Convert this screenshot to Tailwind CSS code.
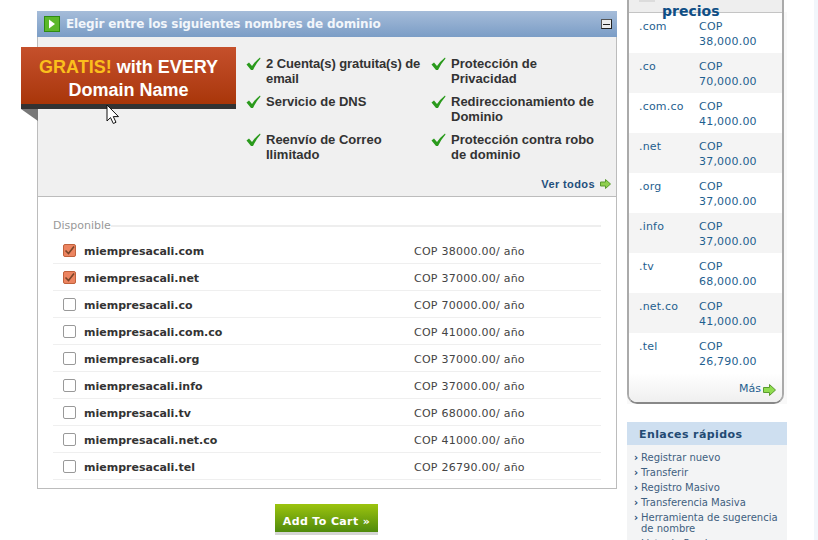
<!DOCTYPE html>
<html lang="es">
<head>
  <meta charset="UTF-8">
  <title>Elegir dominio</title>
  <script src="https://cdn.jsdelivr.net/npm/@tailwindcss/browser@4"></script>
</head>
<body class="bg-white overflow-hidden h-[540px] w-[818px] font-['DejaVu_Sans',sans-serif]">
  <div class="flex items-start pl-[37px] h-[540px] overflow-hidden">

    <!-- main column -->
    <div class="w-[580px] shrink-0 pt-[11px]">
      <div class="relative border border-t-0 border-[#bcbcbc]">
        <div class="-mx-px h-[26px] flex items-center pl-[7px] pr-[5px] bg-gradient-to-b from-[#a5bcd9] to-[#7b9dc6]">
          <span class="w-[16px] h-[16px] border border-[#2e8b12] bg-[#5cb82a] flex items-center justify-center">
            <svg width="8" height="10" viewBox="0 0 8 10"><path d="M1 0.5 L7 5 L1 9.5 Z" fill="#fff"/></svg>
          </span>
          <span class="ml-[6px] text-[12px] font-bold text-[#f2f6fb] tracking-[-0.13px]">Elegir entre los siguientes nombres de dominio</span>
          <span class="ml-auto w-[11px] h-[10px] border border-[#555] border-r-[#222] border-b-[#222] bg-[#eee] flex items-center justify-center">
            <span class="block w-[7px] h-px bg-[#222]"></span>
          </span>
        </div>

        <div class="h-[160px] bg-[#f0f0f0] border-b border-[#bcbcbc] pt-[19px] font-['Liberation_Sans',sans-serif]">
          <div class="grid grid-cols-[185px_170px] pl-[208px] text-[13px] leading-[15px] font-bold text-[#333]">
            <div class="flex gap-[5px] h-[38px]"><svg class="w-[15px] h-[15px] shrink-0" viewBox="0 0 15 15"><path d="M0.5 8.5 L3 6.5 L6 10 Q9 5.5 14 1.5 L14.5 2.5 Q10 7.5 7 14 H5 Z" fill="#2a9a1c"/></svg><span class="tracking-[-0.1px]">2 Cuenta(s) gratuita(s) de email</span></div>
            <div class="flex gap-[5px] h-[38px]"><svg class="w-[15px] h-[15px] shrink-0" viewBox="0 0 15 15"><path d="M0.5 8.5 L3 6.5 L6 10 Q9 5.5 14 1.5 L14.5 2.5 Q10 7.5 7 14 H5 Z" fill="#2a9a1c"/></svg><span>Protección de Privacidad</span></div>
            <div class="flex gap-[5px] h-[38px]"><svg class="w-[15px] h-[15px] shrink-0" viewBox="0 0 15 15"><path d="M0.5 8.5 L3 6.5 L6 10 Q9 5.5 14 1.5 L14.5 2.5 Q10 7.5 7 14 H5 Z" fill="#2a9a1c"/></svg><span>Servicio de DNS</span></div>
            <div class="flex gap-[5px] h-[38px]"><svg class="w-[15px] h-[15px] shrink-0" viewBox="0 0 15 15"><path d="M0.5 8.5 L3 6.5 L6 10 Q9 5.5 14 1.5 L14.5 2.5 Q10 7.5 7 14 H5 Z" fill="#2a9a1c"/></svg><span>Redireccionamiento de Dominio</span></div>
            <div class="flex gap-[5px] h-[38px]"><svg class="w-[15px] h-[15px] shrink-0" viewBox="0 0 15 15"><path d="M0.5 8.5 L3 6.5 L6 10 Q9 5.5 14 1.5 L14.5 2.5 Q10 7.5 7 14 H5 Z" fill="#2a9a1c"/></svg><span>Reenvío de Correo Ilimitado</span></div>
            <div class="flex gap-[5px] h-[38px]"><svg class="w-[15px] h-[15px] shrink-0" viewBox="0 0 15 15"><path d="M0.5 8.5 L3 6.5 L6 10 Q9 5.5 14 1.5 L14.5 2.5 Q10 7.5 7 14 H5 Z" fill="#2a9a1c"/></svg><span>Protección contra robo de dominio</span></div>
          </div>
          <div class="flex items-center justify-end pr-[5px] mt-[6px] text-[11px] font-bold text-[#1f4f7c] tracking-[0.4px]">
            Ver todos
            <svg class="ml-[5px]" width="11" height="10" viewBox="0 0 11 10"><path d="M0.5 3 H5.5 V0.5 L10.5 5 L5.5 9.5 V7 H0.5 Z" fill="#8fd04f" stroke="#5a9a2e"/></svg>
          </div>
        </div>

        <!-- promo ribbon -->
        <div class="absolute left-[-17px] top-[36px] w-[215px]">
          <div class="h-[57px] bg-gradient-to-b from-[#c5502b] to-[#a93608] text-center pt-[9px] font-['Liberation_Sans',sans-serif] font-bold text-[18px] leading-[23px] text-white">
            <span class="text-[#fbbf1c]">GRATIS!</span> with EVERY<br>Domain Name
          </div>
          <div class="h-[5px] bg-[#333]"></div>
          <svg class="block" width="17" height="12" viewBox="0 0 17 12"><path d="M0 0 H17 V12 Z" fill="#777"/></svg>
        </div>
        <!-- mouse cursor -->
        <svg class="absolute left-[68px] top-[93px]" width="14" height="21" viewBox="0 0 14 21"><path d="M1 1 V17 L4.5 13.6 L7.3 19.5 L10 18.3 L7.3 12.6 H12.5 Z" fill="#fff" stroke="#111" stroke-width="1"/></svg>

        <!-- domains -->
        <div class="bg-white px-[15px] pt-[22px] pb-[8px]">
          <div class="flex items-center h-[14px] text-[11px] text-[#999]">Disponible<span class="flex-1 h-[2px] bg-[#eeeeee]"></span></div>
          <div class="mt-[4px] text-[11px]">
            <div class="flex items-center h-[27px] border-b border-[#efefef]"><span class="w-[13px] h-[13px] ml-[10px] rounded-[2px] border border-[#c0623c] bg-[#ec8460] flex items-center justify-center"><svg width="11" height="11" viewBox="0 0 11 11"><path d="M1.5 5.5 L4.5 8.5 L10 1.5" fill="none" stroke="#7a4528" stroke-width="1.6"/></svg></span><span class="ml-[8px] mt-[4px] w-[330px] font-bold text-[#333]">miempresacali.com</span><span class="mt-[4px] text-[#444] tracking-[0.25px]">COP 38000.00/ año</span></div>
            <div class="flex items-center h-[27px] border-b border-[#efefef]"><span class="w-[13px] h-[13px] ml-[10px] rounded-[2px] border border-[#c0623c] bg-[#ec8460] flex items-center justify-center"><svg width="11" height="11" viewBox="0 0 11 11"><path d="M1.5 5.5 L4.5 8.5 L10 1.5" fill="none" stroke="#7a4528" stroke-width="1.6"/></svg></span><span class="ml-[8px] mt-[4px] w-[330px] font-bold text-[#333]">miempresacali.net</span><span class="mt-[4px] text-[#444] tracking-[0.25px]">COP 37000.00/ año</span></div>
            <div class="flex items-center h-[27px] border-b border-[#efefef]"><input type="checkbox" class="appearance-none w-[13px] h-[13px] ml-[10px] rounded-[2px] border border-[#999] bg-white"><span class="ml-[8px] mt-[4px] w-[330px] font-bold text-[#333]">miempresacali.co</span><span class="mt-[4px] text-[#444] tracking-[0.25px]">COP 70000.00/ año</span></div>
            <div class="flex items-center h-[27px] border-b border-[#efefef]"><input type="checkbox" class="appearance-none w-[13px] h-[13px] ml-[10px] rounded-[2px] border border-[#999] bg-white"><span class="ml-[8px] mt-[4px] w-[330px] font-bold text-[#333]">miempresacali.com.co</span><span class="mt-[4px] text-[#444] tracking-[0.25px]">COP 41000.00/ año</span></div>
            <div class="flex items-center h-[27px] border-b border-[#efefef]"><input type="checkbox" class="appearance-none w-[13px] h-[13px] ml-[10px] rounded-[2px] border border-[#999] bg-white"><span class="ml-[8px] mt-[4px] w-[330px] font-bold text-[#333]">miempresacali.org</span><span class="mt-[4px] text-[#444] tracking-[0.25px]">COP 37000.00/ año</span></div>
            <div class="flex items-center h-[27px] border-b border-[#efefef]"><input type="checkbox" class="appearance-none w-[13px] h-[13px] ml-[10px] rounded-[2px] border border-[#999] bg-white"><span class="ml-[8px] mt-[4px] w-[330px] font-bold text-[#333]">miempresacali.info</span><span class="mt-[4px] text-[#444] tracking-[0.25px]">COP 37000.00/ año</span></div>
            <div class="flex items-center h-[27px] border-b border-[#efefef]"><input type="checkbox" class="appearance-none w-[13px] h-[13px] ml-[10px] rounded-[2px] border border-[#999] bg-white"><span class="ml-[8px] mt-[4px] w-[330px] font-bold text-[#333]">miempresacali.tv</span><span class="mt-[4px] text-[#444] tracking-[0.25px]">COP 68000.00/ año</span></div>
            <div class="flex items-center h-[27px] border-b border-[#efefef]"><input type="checkbox" class="appearance-none w-[13px] h-[13px] ml-[10px] rounded-[2px] border border-[#999] bg-white"><span class="ml-[8px] mt-[4px] w-[330px] font-bold text-[#333]">miempresacali.net.co</span><span class="mt-[4px] text-[#444] tracking-[0.25px]">COP 41000.00/ año</span></div>
            <div class="flex items-center h-[27px] border-b border-[#efefef]"><input type="checkbox" class="appearance-none w-[13px] h-[13px] ml-[10px] rounded-[2px] border border-[#999] bg-white"><span class="ml-[8px] mt-[4px] w-[330px] font-bold text-[#333]">miempresacali.tel</span><span class="mt-[4px] text-[#444] tracking-[0.25px]">COP 26790.00/ año</span></div>
          </div>
        </div>
      </div>

      <div class="flex justify-center mt-[15px] pr-[1px]">
        <button class="w-[103px] h-[31px] pt-[9px] border-b-[3px] border-[#d5d5d5] bg-gradient-to-b from-[#9cc40e] to-[#4f8a0c] text-[11px] font-bold text-white tracking-[0.37px]">Add To Cart »</button>
      </div>
    </div>

    <!-- sidebar -->
    <div class="w-[160px] shrink-0 ml-[10px] text-[11px]">
      <div class="bg-gradient-to-b from-white from-[12px] to-[#f9f9f9] to-[12px]">
      <div class="w-[157px] border-x-2 border-b-2 border-[#aaaaaa] border-b-[#888] rounded-b-[10px] h-[404px] bg-white overflow-hidden">
        <div class="h-[13px] border-b border-[#c4c4c4] bg-[#eee] relative">
          <span class="absolute left-[10px] top-0 w-[16px] h-[2px] bg-[#dcdcdc]"></span>
          <span class="absolute left-[33px] top-[1px] text-[14px] font-bold text-[#0f4f86]">precios</span>
        </div>
        <div class="text-[#1f5f8f] tracking-[0.2px] leading-[15px]">
          <div class="flex h-[40px] pt-[6px] pl-[10px]"><span class="w-[60px]">.com</span><span>COP<br>38,000.00</span></div>
          <div class="flex h-[40px] pt-[6px] pl-[10px] bg-[#f4f4f4]"><span class="w-[60px]">.co</span><span>COP<br>70,000.00</span></div>
          <div class="flex h-[40px] pt-[6px] pl-[10px]"><span class="w-[60px]">.com.co</span><span>COP<br>41,000.00</span></div>
          <div class="flex h-[40px] pt-[6px] pl-[10px] bg-[#f4f4f4]"><span class="w-[60px]">.net</span><span>COP<br>37,000.00</span></div>
          <div class="flex h-[40px] pt-[6px] pl-[10px]"><span class="w-[60px]">.org</span><span>COP<br>37,000.00</span></div>
          <div class="flex h-[40px] pt-[6px] pl-[10px] bg-[#f4f4f4]"><span class="w-[60px]">.info</span><span>COP<br>37,000.00</span></div>
          <div class="flex h-[40px] pt-[6px] pl-[10px]"><span class="w-[60px]">.tv</span><span>COP<br>68,000.00</span></div>
          <div class="flex h-[40px] pt-[6px] pl-[10px] bg-[#f4f4f4]"><span class="w-[60px]">.net.co</span><span>COP<br>41,000.00</span></div>
          <div class="flex h-[40px] pt-[6px] pl-[10px]"><span class="w-[60px]">.tel</span><span>COP<br>26,790.00</span></div>
        </div>
        <div class="flex items-center justify-end pr-[6px] pt-[2px] h-[31px] bg-gradient-to-b from-white to-[#eeeeee] text-[#1f5f8f]">Más
          <svg class="ml-[2px]" width="13" height="12" viewBox="0 0 13 12"><path d="M0.5 3.5 H6.5 V0.5 L12.5 6 L6.5 11.5 V8.5 H0.5 Z" fill="#8fdc4f" stroke="#5a9a2e"/></svg>
        </div>
      </div>
      </div>

      <div class="mt-[18px] bg-[#f3f4f5]">
        <div class="h-[23px] flex items-center pl-[12px] pt-[3px] bg-[#cedff0] font-bold text-[#234a73] tracking-[0.4px]">Enlaces rápidos</div>
        <ul class="pt-[7px] pl-[7px] pr-[2px] text-[10px] leading-[11px] text-[#3f5f7f]">
          <li class="flex mb-[4px]"><span class="w-[7px] shrink-0 font-bold text-[#234a73]">›</span><span>Registrar nuevo</span></li>
          <li class="flex mb-[4px]"><span class="w-[7px] shrink-0 font-bold text-[#234a73]">›</span><span>Transferir</span></li>
          <li class="flex mb-[4px]"><span class="w-[7px] shrink-0 font-bold text-[#234a73]">›</span><span>Registro Masivo</span></li>
          <li class="flex mb-[4px]"><span class="w-[7px] shrink-0 font-bold text-[#234a73]">›</span><span>Transferencia Masiva</span></li>
          <li class="flex mb-[4px]"><span class="w-[7px] shrink-0 font-bold text-[#234a73]">›</span><span>Herramienta de sugerencia de nombre</span></li>
          <li class="flex mb-[4px]"><span class="w-[7px] shrink-0 font-bold text-[#234a73]">›</span><span>Lista de Precios</span></li>
        </ul>
      </div>
    </div>

    <!-- page background strip on the right edge -->
    <div class="ml-auto w-[4px] h-[540px] bg-[#f2f6fb]"></div>
  </div>
</body>
</html>
